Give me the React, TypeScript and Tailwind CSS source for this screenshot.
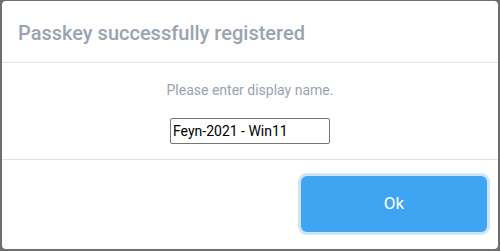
export default function App() {
  return (
    <div className="w-[500px] h-[251px] bg-[#6e6e6e] pl-[2px] pt-[1px] pr-[2px] pb-[2px] font-['Roboto',sans-serif]">
      <div className="h-full bg-white rounded-[4px] flex flex-col">
        <div className="h-[62px] flex items-center pl-[16px] border-b border-[#dee2e6]">
          <h1 className="text-[20px] font-medium text-[#9aa4b1] leading-none pt-[3px]">
            Passkey successfully registered
          </h1>
        </div>
        <div className="h-[97px] flex flex-col items-center border-b border-[#dee2e6] pt-[19px]">
          <p className="text-[14px] text-[#9aa4b1] leading-[17px]">Please enter display name.</p>
          <input
            type="text"
            defaultValue="Feyn-2021 - Win11"
            className="mt-[19px] w-[160px] h-[26px] border border-[#767676] rounded-[2px] px-[2px] text-[14px] text-black outline-none"
          />
        </div>
        <div className="flex-1 flex justify-end items-start pt-[16px] pr-[11px]">
          <button className="w-[186px] h-[56px] bg-[#3fa5f3] text-white text-[17px] rounded-[6px] ring-[3px] ring-[#cfe4fd]">
            Ok
          </button>
        </div>
      </div>
    </div>
  )
}
